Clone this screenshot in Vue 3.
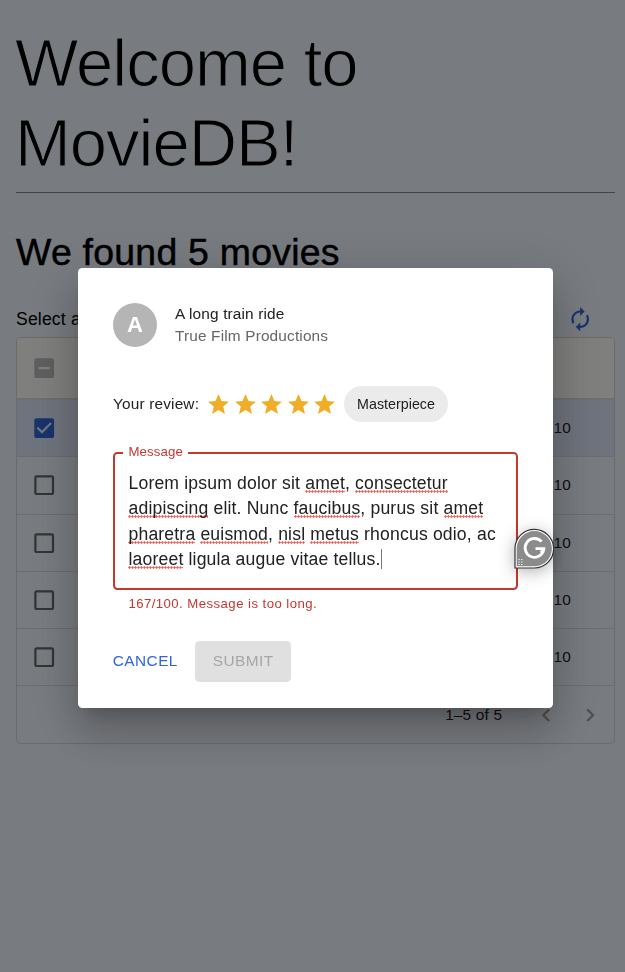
<script setup>
const rows = [
  { id: 1, checked: true, score: '10' },
  { id: 2, checked: false, score: '10' },
  { id: 3, checked: false, score: '10' },
  { id: 4, checked: false, score: '10' },
  { id: 5, checked: false, score: '10' },
]

const message = [
  { text: 'Lorem ipsum dolor sit ' },
  { text: 'amet', flagged: true },
  { text: ', ' },
  { text: 'consectetur', flagged: true },
  { text: ' ' },
  { text: 'adipiscing', flagged: true },
  { text: ' elit. Nunc ' },
  { text: 'faucibus', flagged: true },
  { text: ', purus sit ' },
  { text: 'amet', flagged: true },
  { text: ' ' },
  { text: 'pharetra', flagged: true },
  { text: ' ' },
  { text: 'euismod', flagged: true },
  { text: ', ' },
  { text: 'nisl', flagged: true },
  { text: ' ' },
  { text: 'metus', flagged: true },
  { text: ' rhoncus odio, ac ' },
  { text: 'laoreet', flagged: true },
  { text: ' ligula augue vitae tellus.' },
]

const boxPaths = {
  mixed: 'M19 3H5c-1.1 0-2 .9-2 2v14c0 1.1.9 2 2 2h14c1.1 0 2-.9 2-2V5c0-1.1-.9-2-2-2zm-2 10H7v-2h10v2z',
  on: 'M19 3H5c-1.11 0-2 .9-2 2v14c0 1.1.89 2 2 2h14c1.11 0 2-.9 2-2V5c0-1.1-.89-2-2-2zm-9 14l-5-5 1.41-1.41L10 14.17l7.59-7.59L19 8l-9 9z',
  off: 'M19 5v14H5V5h14m0-2H5c-1.1 0-2 .9-2 2v14c0 1.1.9 2 2 2h14c1.1 0 2-.9 2-2V5c0-1.1-.9-2-2-2z',
}
</script>

<template>
  <div class="page">
    <h1>Welcome to<br />MovieDB!</h1>
    <hr />
    <h2>We found 5 movies</h2>
    <div class="toolbar">
      <p>Select a</p>
      <svg class="refresh" viewBox="0 0 24 24">
        <path d="M12 6v3l4-4-4-4v3c-4.42 0-8 3.58-8 8 0 1.57.46 3.03 1.24 4.26L6.7 14.8c-.45-.83-.7-1.79-.7-2.8 0-3.31 2.69-6 6-6zm6.76 1.74L17.3 9.2c.44.84.7 1.79.7 2.8 0 3.31-2.69 6-6 6v-3l-4 4 4 4v-3c4.42 0 8-3.58 8-8 0-1.57-.46-3.03-1.24-4.26z" />
      </svg>
    </div>
    <div class="grid">
      <div class="head">
        <svg class="box mixed" viewBox="0 0 24 24"><path :d="boxPaths.mixed" /></svg>
      </div>
      <div v-for="row in rows" :key="row.id" class="row" :class="{ selected: row.checked }">
        <svg class="box" :class="{ on: row.checked }" viewBox="0 0 24 24">
          <path :d="row.checked ? boxPaths.on : boxPaths.off" />
        </svg>
        <span class="score">{{ row.score }}</span>
      </div>
      <div class="foot">
        <span class="range">1–5 of 5</span>
        <svg class="chev" viewBox="0 0 24 24"><path d="M15.41 7.41L14 6l-6 6 6 6 1.41-1.41L10.83 12z" /></svg>
        <svg class="chev" viewBox="0 0 24 24"><path d="M10 6L8.59 7.41 13.17 12l-4.58 4.59L10 18l6-6z" /></svg>
      </div>
    </div>
  </div>

  <div class="backdrop">
    <div class="dialog">
      <div class="movie">
        <div class="avatar">A</div>
        <div class="names">
          <div class="title">A long train ride</div>
          <div class="studio">True Film Productions</div>
        </div>
      </div>
      <div class="review">
        <span>Your review:</span>
        <div class="stars">
          <svg v-for="n in 5" :key="n" viewBox="0 0 24 24">
            <path d="M12 17.27L18.18 21l-1.64-7.03L22 9.24l-7.19-.61L12 2 9.19 8.63 2 9.24l5.46 4.73L5.82 21z" />
          </svg>
        </div>
        <span class="chip">Masterpiece</span>
      </div>
      <fieldset class="field">
        <legend>Message</legend>
        <div class="text"><span v-for="(part, i) in message" :key="i" :class="{ flagged: part.flagged }">{{ part.text }}</span><i class="caret"></i></div>
        <div class="badge">
          <svg viewBox="0 0 40 41">
            <path class="edge" d="M1 40V20.5A19.3 19.3 0 1 1 20.3 40z" />
            <path class="drop" d="M2.7 38.3V20.5A17.6 17.6 0 1 1 20.3 38.3z" />
            <path class="gee" d="M27.6 13.7A9.4 9.4 0 1 0 29.9 20.7H21.5" />
            <path class="gee hook" d="M29.6 20.2L26.6 24.6" />
            <path class="grip" d="M4.5 31.5h1.2M7.2 31.5h1.2M4.5 34h1.2M7.2 34h1.2M4.5 36.5h1.2M7.2 36.5h1.2" />
          </svg>
        </div>
      </fieldset>
      <p class="helper">167/100. Message is too long.</p>
      <div class="actions">
        <button class="cancel">Cancel</button>
        <button class="submit" disabled>Submit</button>
      </div>
    </div>
  </div>
</template>

<style>
body {
  background: #f0f6ff;
}
</style>

<style scoped>
.page,
.dialog {
  font-family: "Liberation Sans", Arial, sans-serif;
}
.page {
  height: 972px;
  padding: 0 10.5px 0 16px;
  box-sizing: border-box;
  overflow: hidden;
  color: #000;
}
h1 {
  margin: 0 0 0 -1px;
  padding-top: 23px;
  font-size: 67px;
  font-weight: 400;
  line-height: 80px;
  letter-spacing: -1px;
  -webkit-text-stroke: 1.1px #f0f6ff;
}
hr {
  margin: 9px 0 0;
  border: 0;
  height: 1px;
  background: #888;
}
h2 {
  margin: 36px 0 0;
  font-size: 37.4px;
  font-weight: 400;
  line-height: 46px;
  letter-spacing: 0.007em;
  -webkit-text-stroke: 0.5px #000;
}
.toolbar {
  display: flex;
  align-items: center;
  justify-content: space-between;
  height: 36px;
  margin-top: 26px;
  padding-right: 21.5px;
}
.toolbar p {
  margin: 0;
  font-size: 17.6px;
  letter-spacing: 0.00938em;
}
.refresh {
  width: 26.4px;
  height: 26.4px;
  fill: #2f67d8;
}
.grid {
  border: 1px solid #d6d6d8;
  border-radius: 4.4px;
  overflow: hidden;
  box-sizing: border-box;
  height: 407px;
}
.head,
.row,
.foot {
  display: flex;
  align-items: center;
  box-sizing: border-box;
}
.head {
  height: 62px;
  background: #fffefd;
  border-bottom: 2px solid #dcdcdc;
}
.row {
  height: 57.3px;
  justify-content: space-between;
  padding-right: 42.5px;
  border-bottom: 1px solid #d9dade;
}
.row.selected {
  background: #dfe7fa;
}
.box {
  width: 26.4px;
  height: 26.4px;
  margin-left: 14px;
  fill: #666;
}
.box.mixed {
  fill: #bdbdbd;
}
.box.on {
  fill: #2f67d8;
}
.score {
  font-size: 15.4px;
  letter-spacing: 0.01em;
  color: #222;
}
.foot {
  height: 58px;
  justify-content: flex-end;
  padding-right: 10px;
  font-size: 15.4px;
  color: #222;
}
.range {
  margin-right: 31px;
  letter-spacing: 0.01071em;
}
.chev {
  width: 26.4px;
  height: 26.4px;
  fill: #a0a0a0;
}
.chev + .chev {
  margin-left: 17.6px;
}
.backdrop {
  position: fixed;
  inset: 0;
  padding: 267.5px 0 0 78.4px;
  background: rgba(0, 0, 0, 0.5);
}
.dialog {
  width: 475px;
  height: 440.5px;
  box-sizing: border-box;
  padding: 35px 34.6px;
  border-radius: 4.4px;
  background: #fff;
  color: #212121;
  box-shadow:
    0 12px 16.5px -8px rgba(0, 0, 0, 0.2),
    0 26px 42px 3px rgba(0, 0, 0, 0.14),
    0 10px 51px 9px rgba(0, 0, 0, 0.12);
}
.movie {
  display: flex;
  align-items: center;
  gap: 18px;
  height: 44px;
  font-size: 15.4px;
  line-height: 22px;
  letter-spacing: 0.01em;
}
.avatar {
  width: 44px;
  height: 44px;
  border-radius: 50%;
  background: #b5b5b5;
  color: #fff;
  font-size: 22px;
  font-weight: 700;
  line-height: 44px;
  text-align: center;
}
.studio {
  color: #666;
}
.review {
  display: flex;
  align-items: center;
  height: 36px;
  margin-top: 39.5px;
  font-size: 15.4px;
  letter-spacing: 0.01071em;
}
.stars {
  display: flex;
  gap: 1.5px;
  margin: 1px 0 0 7px;
}
.stars svg {
  width: 25px;
  height: 25px;
  fill: #f0ad28;
}
.chip {
  height: 35.2px;
  margin-left: 7px;
  padding: 0 13px;
  border-radius: 18px;
  background: #ebebeb;
  font-size: 14.3px;
  line-height: 37px;
  letter-spacing: 0;
}
.field {
  position: relative;
  width: 405px;
  height: 146px;
  box-sizing: border-box;
  margin: 21.5px 0 0;
  padding: 0 13.5px;
  border: 2px solid #c4382f;
  border-radius: 4.4px;
}
.field legend {
  margin-left: -5.5px;
  padding: 0 5.5px;
  height: 18px;
  font-size: 13.2px;
  line-height: 15px;
  letter-spacing: 0.00938em;
  color: #c4382f;
}
.text {
  padding-top: 9.5px;
  font-size: 17.6px;
  line-height: 25.4px;
  letter-spacing: 0.00938em;
}
.flagged {
  background: radial-gradient(circle, #f0605a 0.9px, transparent 1.5px) 0 17px / 3px 3px repeat-x;
}
.caret {
  display: inline-block;
  width: 1px;
  height: 20px;
  background: #777;
  vertical-align: -4px;
}
.badge {
  position: absolute;
  right: -37.6px;
  bottom: 18.5px;
  width: 40px;
  height: 41px;
  filter: drop-shadow(0 3px 8px rgba(0, 0, 0, 0.3));
}
.badge svg {
  display: block;
  width: 40px;
  height: 41px;
}
.edge {
  fill: #fff;
  stroke: #333;
  stroke-width: 1.2;
}
.drop {
  fill: #8b8b8b;
}
.gee {
  fill: none;
  stroke: #fff;
  stroke-width: 2.8;
}
.hook {
  stroke-width: 2;
}
.grip {
  stroke: #fff;
  stroke-width: 1.2;
}
.helper {
  margin: 5px 15.4px 0;
  font-size: 13.2px;
  line-height: 17px;
  letter-spacing: 0.03333em;
  color: #c4382f;
}
.actions {
  display: flex;
  gap: 8.5px;
  margin-top: 29px;
  margin-left: -9px;
}
button {
  height: 41px;
  border: 0;
  border-radius: 4.4px;
  font-family: inherit;
  font-size: 15.4px;
  letter-spacing: 0.02857em;
  text-transform: uppercase;
}
.cancel {
  padding: 0 8.8px 1px;
  background: none;
  color: #2f67d8;
}
.submit {
  padding: 0 17.6px 1px;
  background: #e0e0e0;
  color: #a6a6a6;
}
</style>
